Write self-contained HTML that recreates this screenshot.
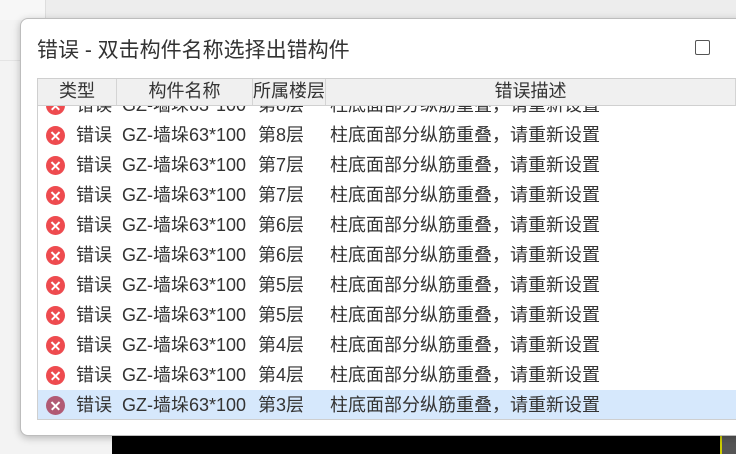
<!DOCTYPE html>
<html><head><meta charset="utf-8"><style>
*{margin:0;padding:0;box-sizing:border-box}
body{width:736px;height:454px;overflow:hidden;background:#f3f3f3;position:relative;font-family:"Liberation Sans","Noto Sans CJK SC",sans-serif;color:#333}
.top{position:absolute;left:0;top:0;width:736px;height:20px;background:#ededed}
.top2{position:absolute;left:0;top:0;width:46px;height:20px;background:#f7f7f7;border-right:1px solid #ddd}
.lft{position:absolute;left:0;top:60px;width:20px;height:270px;border-top:1px solid #e4e4e4}
.blk{position:absolute;left:112px;top:432px;width:624px;height:22px;background:#000}
.blk2{position:absolute;left:720px;top:432px;width:16px;height:22px;background:#555;border-left:2px solid #cc0}
.dlg{position:absolute;left:20px;top:18px;width:730px;height:418px;background:#fff;border:1px solid #bdbdbd;border-radius:8px;box-shadow:0 2px 8px rgba(0,0,0,.25)}
.title{position:absolute;left:16px;top:15px;font-size:21px;color:#333}
.max{position:absolute;left:674px;top:21px;width:15px;height:15px;border:1.5px solid #555;border-radius:2px}
.list{position:absolute;left:16px;top:59px;width:700px;height:342px;border:1px solid #cfcfcf;overflow:hidden}
.hdr{position:absolute;left:0;top:0;height:27px;width:700px;background:#f0f0f0;border-bottom:1px solid #d0d0d0;z-index:2;font-size:18px}
.hdr div{position:absolute;top:0;height:26px;line-height:25px;text-align:center;border-right:1px solid #d4d4d4}
.row{position:absolute;left:0;width:700px;height:30px;font-size:18px;line-height:30px;white-space:nowrap}
.row span{position:absolute;top:0}
.ic{position:absolute;left:8px;top:6px;width:19px;height:19px;border-radius:50%;background:#ee4b4f}
.ic:before,.ic:after{content:"";position:absolute;left:4px;top:8.5px;width:11px;height:1.6px;background:#fff;transform:rotate(45deg)}
.ic:after{transform:rotate(-45deg)}
.sel{background:#d6e8fc}
.sel .ic{background:#b15a74}
</style></head><body>
<div class="top"></div><div class="top2"></div><div class="lft"></div>
<div class="blk"></div><div class="blk2"></div>
<div class="dlg">
<div class="title">错误 - 双击构件名称选择出错构件</div>
<div class="max"></div>
<div class="list">
<div class="hdr"><div style="left:0;width:79px">类型</div><div style="left:79px;width:136px">构件名称</div><div style="left:215px;width:73px">所属楼层</div><div style="left:288px;width:410px">错误描述</div></div>
<div class="row" style="top:11px"><i class="ic"></i><span style="left:38px">错误</span><span style="left:84px">GZ-墙垛63*100</span><span style="left:220px">第8层</span><span style="left:292px">柱底面部分纵筋重叠，请重新设置</span></div>
<div class="row" style="top:41px"><i class="ic"></i><span style="left:38px">错误</span><span style="left:84px">GZ-墙垛63*100</span><span style="left:220px">第8层</span><span style="left:292px">柱底面部分纵筋重叠，请重新设置</span></div>
<div class="row" style="top:71px"><i class="ic"></i><span style="left:38px">错误</span><span style="left:84px">GZ-墙垛63*100</span><span style="left:220px">第7层</span><span style="left:292px">柱底面部分纵筋重叠，请重新设置</span></div>
<div class="row" style="top:101px"><i class="ic"></i><span style="left:38px">错误</span><span style="left:84px">GZ-墙垛63*100</span><span style="left:220px">第7层</span><span style="left:292px">柱底面部分纵筋重叠，请重新设置</span></div>
<div class="row" style="top:131px"><i class="ic"></i><span style="left:38px">错误</span><span style="left:84px">GZ-墙垛63*100</span><span style="left:220px">第6层</span><span style="left:292px">柱底面部分纵筋重叠，请重新设置</span></div>
<div class="row" style="top:161px"><i class="ic"></i><span style="left:38px">错误</span><span style="left:84px">GZ-墙垛63*100</span><span style="left:220px">第6层</span><span style="left:292px">柱底面部分纵筋重叠，请重新设置</span></div>
<div class="row" style="top:191px"><i class="ic"></i><span style="left:38px">错误</span><span style="left:84px">GZ-墙垛63*100</span><span style="left:220px">第5层</span><span style="left:292px">柱底面部分纵筋重叠，请重新设置</span></div>
<div class="row" style="top:221px"><i class="ic"></i><span style="left:38px">错误</span><span style="left:84px">GZ-墙垛63*100</span><span style="left:220px">第5层</span><span style="left:292px">柱底面部分纵筋重叠，请重新设置</span></div>
<div class="row" style="top:251px"><i class="ic"></i><span style="left:38px">错误</span><span style="left:84px">GZ-墙垛63*100</span><span style="left:220px">第4层</span><span style="left:292px">柱底面部分纵筋重叠，请重新设置</span></div>
<div class="row" style="top:281px"><i class="ic"></i><span style="left:38px">错误</span><span style="left:84px">GZ-墙垛63*100</span><span style="left:220px">第4层</span><span style="left:292px">柱底面部分纵筋重叠，请重新设置</span></div>
<div class="row sel" style="top:311px"><i class="ic"></i><span style="left:38px">错误</span><span style="left:84px">GZ-墙垛63*100</span><span style="left:220px">第3层</span><span style="left:292px">柱底面部分纵筋重叠，请重新设置</span></div>
</div>
</div>
</body></html>
